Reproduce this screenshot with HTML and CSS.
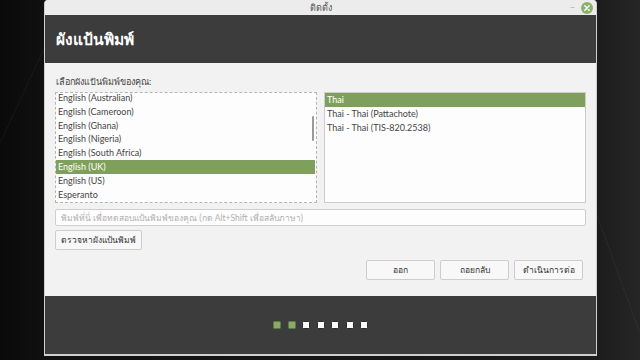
FILE: index.html
```html
<!DOCTYPE html>
<html lang="th">
  <head>
    <meta charset="UTF-8" />
    <meta name="viewport" content="width=device-width, initial-scale=1.0" />
    <title>ติดตั้ง</title>
    <link rel="stylesheet" href="styles.css">
  </head>
  <body>
    <div class="window">
      <div class="titlebar">
        <span class="title">ติดตั้ง</span>
        <span class="minimize">–</span>
        <span class="close">
          <svg width="12" height="12" viewBox="0 0 12 12">
            <circle cx="6" cy="6" r="6" fill="#8db36a" />
            <path d="M3.8 3.8 L8.2 8.2 M8.2 3.8 L3.8 8.2" stroke="#fff" stroke-width="1.4" stroke-linecap="round" />
          </svg>
        </span>
      </div>
      <div class="header">
        <h1>ผังแป้นพิมพ์</h1>
      </div>
      <div class="content">
        <div class="label">เลือกผังแป้นพิมพ์ของคุณ:</div>
        <div class="lists">
          <div class="list list-focus">
            <div class="rows rows-scrolled">
              <div class="row">English (Australian)</div>
              <div class="row">English (Cameroon)</div>
              <div class="row">English (Ghana)</div>
              <div class="row">English (Nigeria)</div>
              <div class="row">English (South Africa)</div>
              <div class="row selected">English (UK)</div>
              <div class="row">English (US)</div>
              <div class="row">Esperanto</div>
            </div>
            <div class="scrollbar"></div>
          </div>
          <div class="list">
            <div class="rows">
              <div class="row selected">Thai</div>
              <div class="row">Thai - Thai (Pattachote)</div>
              <div class="row">Thai - Thai (TIS-820.2538)</div>
            </div>
          </div>
        </div>
        <input class="test-input" type="text" placeholder="พิมพ์ที่นี่ เพื่อทดสอบแป้นพิมพ์ของคุณ (กด Alt+Shift เพื่อสลับภาษา)" />
        <div>
          <button class="btn detect">ตรวจหาผังแป้นพิมพ์</button>
        </div>
        <div class="actions">
          <button class="btn">ออก</button>
          <button class="btn">ถอยกลับ</button>
          <button class="btn">ดำเนินการต่อ</button>
        </div>
      </div>
      <div class="footer">
        <div class="dots">
          <span class="dot done"></span>
          <span class="dot done"></span>
          <span class="dot"></span>
          <span class="dot"></span>
          <span class="dot"></span>
          <span class="dot"></span>
          <span class="dot"></span>
        </div>
      </div>
    </div>
  </body>
</html>
```

FILE: styles.css
```css
body {
  margin: 0;
  height: 360px;
  overflow: hidden;
  font-family: Lato, "Noto Sans", sans-serif;
  background:
    linear-gradient(115deg, transparent 0 60px, rgba(255, 255, 255, 0.04) 60px 61px, transparent 61px),
    linear-gradient(70deg, transparent 0 610px, rgba(255, 255, 255, 0.04) 610px 611px, transparent 611px),
    linear-gradient(90deg, #0a0a0a 0, #101010 44px, #1c1c1c 597px, #262626 640px);
}
.window {
  width: 551px;
  margin-left: 44px;
  height: 354px;
  display: flex;
  flex-direction: column;
  border: 1px solid #cfcfcf;
  border-top: none;
  border-bottom-width: 2px;
  border-radius: 4px 4px 0 0;
  background: #f2f2f2;
}
.titlebar {
  height: 15px;
  background: #ececec;
  display: flex;
  align-items: center;
  justify-content: center;
  position: relative;
  border-radius: 4px 4px 0 0;
}
.title {
  font-size: 9px;
  color: #555;
}
.minimize {
  position: absolute;
  right: 21px;
  top: 1px;
  font-size: 9px;
  color: #aaa;
}
.close {
  position: absolute;
  right: 3px;
  top: 2px;
  line-height: 0;
}
.header {
  height: 48px;
  background: #3c3c3c;
  display: flex;
  align-items: center;
  padding-left: 11px;
}
.header h1 {
  margin: 0;
  color: #fff;
  font-size: 15.5px;
  font-weight: bold;
}
.content {
  flex: 1;
  padding: 12px 10px 0 10px;
  font-size: 9px;
  color: #454545;
}
.label {
  line-height: 12px;
  margin-left: 1px;
  margin-top: 1px;
}
.lists {
  display: grid;
  grid-template-columns: 262px 262px;
  column-gap: 7px;
  margin-top: 4px;
  height: 111px;
}
.list {
  background: #fdfdfd;
  border: 1px solid #cdcdcd;
  overflow: hidden;
  position: relative;
}
.list-focus {
  border: 1px dashed #b5b5b5;
}
.rows-scrolled {
  margin-top: -2px;
}
.row {
  height: 13.8px;
  line-height: 13.8px;
  padding-left: 2px;
  white-space: nowrap;
}
.row.selected {
  background: #7f9f5c;
  color: #fff;
}
.list-focus .row.selected {
  margin-right: 1px;
}
.scrollbar {
  position: absolute;
  right: 2px;
  top: 23px;
  width: 2px;
  height: 25px;
  background: #9a9a9a;
  border-radius: 1px;
}
.test-input {
  display: block;
  box-sizing: border-box;
  width: 100%;
  height: 17px;
  margin-top: 6px;
  border: 1px solid #cfcfcf;
  border-radius: 2px;
  background: #fdfdfd;
  padding: 0 5px;
  font-family: inherit;
  font-size: 8.5px;
}
.test-input::placeholder {
  color: #b0b0b0;
}
.btn {
  font-family: inherit;
  font-size: 8.5px;
  color: #333;
  background: #f8f8f8;
  border: 1px solid #cdcdcd;
  border-radius: 2px;
  height: 20px;
  padding: 0;
}
.detect {
  margin-top: 4px;
  width: 87px;
}
.actions {
  display: flex;
  justify-content: flex-end;
  gap: 5px;
  margin-top: 10px;
  margin-right: 3px;
}
.actions .btn {
  width: 69px;
}
.footer {
  height: 58px;
  background: #3c3c3c;
  display: flex;
  align-items: center;
  justify-content: center;
}
.dots {
  display: flex;
  gap: 6.5px;
}
.dot {
  width: 8px;
  height: 8px;
  box-sizing: border-box;
  border-radius: 1.5px;
  background: #fafafa;
  border: 1px solid #2a2a2a;
}
.dot.done {
  background: #8aab68;
  border-color: #5f7a47;
}
```
